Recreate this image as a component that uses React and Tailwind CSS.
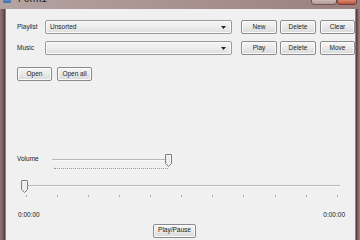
import React from "react";

function Btn({ children, className = "" }) {
  return (
    <div
      className={
        "h-[14px] flex items-center justify-center rounded-[2px] border border-[#8a8a8a] bg-gradient-to-b from-[#f6f6f6] via-[#e9e9e9] to-[#d9d9d9] text-[#222] shadow-[inset_0_0_0_1px_#fbfbfb] " +
        className
      }
    >
      {children}
    </div>
  );
}

function Combo({ value }) {
  return (
    <div className="w-[187px] h-[14px] flex items-center rounded-[2px] border border-[#9a9a9a] bg-gradient-to-b from-[#f4f4f4] via-[#ececec] to-[#dedede] shadow-[inset_0_0_0_1px_#fafafa]">
      <span className="pl-[4px] flex-1 text-[#222]">{value}</span>
      <svg width="5" height="3" viewBox="0 0 5 3" className="mr-[5px]">
        <path d="M0 0H5L2.5 3Z" fill="#222" />
      </svg>
    </div>
  );
}

function Thumb({ className = "" }) {
  return (
    <svg width="7" height="13" viewBox="0 0 7 13" className={className}>
      <path
        d="M1 0.5H6Q6.5 0.5 6.5 1V9.5L3.5 12.5L0.5 9.5V1Q0.5 0.5 1 0.5Z"
        fill="#ececec"
        stroke="#7c7c7c"
        strokeWidth="1"
      />
      <path d="M1.5 1.5H5.5V9L3.5 11" fill="none" stroke="#fbfbfb" strokeWidth="0.8" />
    </svg>
  );
}

export default function App() {
  const ticks = Array.from({ length: 11 }, (_, i) => 5.7 + 31.1 * i);
  return (
    <div className="w-[360px] h-[240px] overflow-hidden flex flex-col font-['Liberation_Sans',sans-serif] text-[6.5px] leading-none">
      {/* title bar */}
      <div className="h-[9px] flex bg-gradient-to-r from-[#b4a3a1] via-[#a8928f] to-[#9a7f7b] overflow-hidden">
        <div className="w-[8px] h-[6px] mt-[-3px] ml-[3px] bg-gradient-to-b from-[#7fa7d6] to-[#3f6fb0] rounded-[1px]" />
        <div className="mt-[-6px] ml-[7px] text-[10px] text-[#1a1a1a] font-['Liberation_Sans',sans-serif]">
          Form1
        </div>
        <div className="flex-1" />
        <div className="w-[26px] h-[6px] mt-[-1px] border border-[#6b5656] rounded-b-[3px] bg-gradient-to-b from-[#c9b7b4] to-[#b19a97]" />
        <div className="w-[20px] h-[6px] mt-[-1px] mr-[3px] border border-[#6b4040] rounded-b-[3px] bg-gradient-to-b from-[#d88870] to-[#c0503a]" />
      </div>
      <div className="flex flex-1">
        <div className="w-[5px] bg-gradient-to-r from-[#8e7571] via-[#7c625e] to-[#4e3a38]" />
        <div className="flex-1 bg-[#f0f0f0] border-l border-[#8d8585] flex flex-col pt-[11px] pl-[11px]">
          {/* Playlist row */}
          <div className="flex items-center h-[14px]">
            <span className="w-[28px] text-[#222]">Playlist</span>
            <Combo value="Unsorted" />
            <Btn className="w-[36px] ml-[9px]">New</Btn>
            <Btn className="w-[36px] ml-[3px]">Delete</Btn>
            <Btn className="w-[35px] ml-[4px]">Clear</Btn>
          </div>
          {/* Music row */}
          <div className="flex items-center h-[14px] mt-[7px]">
            <span className="w-[28px] text-[#222]">Music</span>
            <Combo value="" />
            <Btn className="w-[36px] ml-[9px]">Play</Btn>
            <Btn className="w-[36px] ml-[3px]">Delete</Btn>
            <Btn className="w-[35px] ml-[4px]">Move</Btn>
          </div>
          {/* Open row */}
          <div className="flex items-center h-[14px] mt-[12px]">
            <Btn className="w-[35px]">Open</Btn>
            <Btn className="w-[35px] ml-[5px]">Open all</Btn>
          </div>
          {/* Volume */}
          <div className="flex items-start h-[16px] mt-[73px]">
            <span className="w-[34px] mt-[2px] text-[#222]">Volume</span>
            <div className="relative w-[122px] h-[16px]">
              <div className="absolute left-[1px] right-[4px] top-[5px] h-[2px] border-t border-[#b8b8b8] border-b-[#f8f8f8] border-b" />
              <div className="absolute left-[3px] w-[114px] top-[14px] border-t border-dotted border-[#9a9a9a]" />
              <Thumb className="absolute left-[114px] top-0" />
            </div>
          </div>
          {/* Position slider */}
          <div className="relative w-[322px] h-[17px] mt-[10px] ml-[3px]">
            <div className="absolute left-[2px] w-[318px] top-[5px] h-[2px] border-t border-[#b8b8b8] border-b border-b-[#f8f8f8]" />
            {ticks.map((x, i) => (
              <div
                key={i}
                className="absolute top-[15px] w-px h-[2px] bg-[#a8a8a8]"
                style={{ left: x }}
              />
            ))}
            <Thumb className="absolute left-[1px] top-0" />
          </div>
          {/* Times */}
          <div className="w-[327px] flex justify-between mt-[15px] ml-[1px] text-[#222]">
            <span>0:00:00</span>
            <span>0:00:00</span>
          </div>
          {/* Play/Pause */}
          <Btn className="w-[43px] h-[13px] mt-[5px] ml-[136px]">Play/Pause</Btn>
        </div>
        <div className="w-[5px] border-l border-[#8d8585] bg-gradient-to-r from-[#4e3a38] via-[#7c625e] to-[#a08884]" />
      </div>
    </div>
  );
}
